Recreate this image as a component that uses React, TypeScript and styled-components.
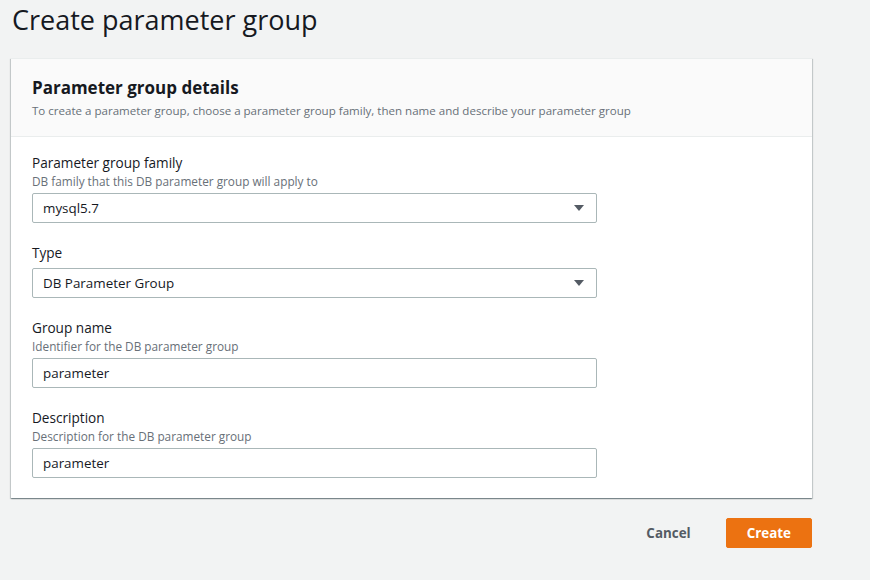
import React from "react";
import styled, { createGlobalStyle } from "styled-components";

const Global = createGlobalStyle`
  html, body { margin: 0; padding: 0; background: #f2f3f3; }
  body { font-family: "Open Sans", "Noto Sans", Arial, sans-serif; color: #16191f; }
  * { box-sizing: border-box; }
`;

const Page = styled.div`
  width: 870px;
  height: 580px;
  background: #f2f3f3;
  padding: 3px 0 0 11px;
  overflow: hidden;
`;

const Title = styled.h1`
  margin: 0 0 21px 1px;
  font-size: 27px;
  font-weight: 400;
  line-height: 34px;
  color: #16191f;
`;

const Card = styled.section`
  width: 801px;
  background: #fff;
  box-shadow: 0 1px 1px 0 rgba(0, 28, 36, 0.3), 1px 1px 1px 0 rgba(0, 28, 36, 0.15),
    -1px 1px 1px 0 rgba(0, 28, 36, 0.15);
  border-top: 1px solid #eaeded;
`;

const CardHeader = styled.div`
  background: #fafafa;
  border-bottom: 1px solid #eaeded;
  padding: 17px 20px 17px 21px;
`;

const CardTitle = styled.h2`
  margin: 0;
  font-size: 17px;
  font-weight: 700;
  line-height: 24px;
`;

const CardDesc = styled.p`
  margin: 3px 0 0;
  font-size: 11.55px;
  line-height: 16px;
  color: #687078;
`;

const CardBody = styled.div`
  padding: 16px 20px 20px 21px;
  display: flex;
  flex-direction: column;
  gap: 20px;
`;

const Field = styled.div`
  display: flex;
  flex-direction: column;
`;

const Label = styled.label`
  font-size: 13.6px;
  line-height: 20px;
`;

const Hint = styled.span`
  font-size: 11.8px;
  line-height: 16px;
  color: #687078;
  margin-bottom: 4px;
`;

const Control = styled.div<{ $noHint?: boolean }>`
  width: 565px;
  height: 30px;
  margin-top: ${(p) => (p.$noHint ? "5px" : "0")};
  border: 1px solid #aab7b8;
  border-radius: 2px;
  background: #fff;
  display: flex;
  align-items: center;
  justify-content: space-between;
  padding: 0 12px 0 10px;
  font-size: 13.4px;
  color: #16191f;
`;

const Caret = styled.svg`
  width: 10px;
  height: 6px;
`;

const Footer = styled.div`
  width: 801px;
  display: flex;
  justify-content: flex-end;
  align-items: center;
  gap: 14px;
  margin-top: 20px;
`;

const Button = styled.button<{ $primary?: boolean }>`
  font-family: inherit;
  font-size: 13.4px;
  font-weight: 700;
  height: 30px;
  padding: 0 20px;
  border-radius: 2px;
  cursor: pointer;
  border: 1px solid ${(p) => (p.$primary ? "#ec7211" : "transparent")};
  background: ${(p) => (p.$primary ? "#ec7211" : "transparent")};
  color: ${(p) => (p.$primary ? "#fff" : "#545b64")};
  min-width: ${(p) => (p.$primary ? "86px" : "auto")};
`;

const Select = ({ value, noHint }: { value: string; noHint?: boolean }) => (
  <Control $noHint={noHint}>
    <span>{value}</span>
    <Caret viewBox="0 0 10 6">
      <path d="M0 0 H10 L5 6 Z" fill="#545b64" />
    </Caret>
  </Control>
);

export default function App() {
  return (
    <Page>
      <Global />
      <Title>Create parameter group</Title>
      <Card>
        <CardHeader>
          <CardTitle>Parameter group details</CardTitle>
          <CardDesc>
            To create a parameter group, choose a parameter group family, then name and describe your parameter group
          </CardDesc>
        </CardHeader>
        <CardBody>
          <Field>
            <Label>Parameter group family</Label>
            <Hint>DB family that this DB parameter group will apply to</Hint>
            <Select value="mysql5.7" />
          </Field>
          <Field>
            <Label>Type</Label>
            <Select value="DB Parameter Group" noHint />
          </Field>
          <Field>
            <Label>Group name</Label>
            <Hint>Identifier for the DB parameter group</Hint>
            <Control>parameter</Control>
          </Field>
          <Field>
            <Label>Description</Label>
            <Hint>Description for the DB parameter group</Hint>
            <Control>parameter</Control>
          </Field>
        </CardBody>
      </Card>
      <Footer>
        <Button>Cancel</Button>
        <Button $primary>Create</Button>
      </Footer>
    </Page>
  );
}
